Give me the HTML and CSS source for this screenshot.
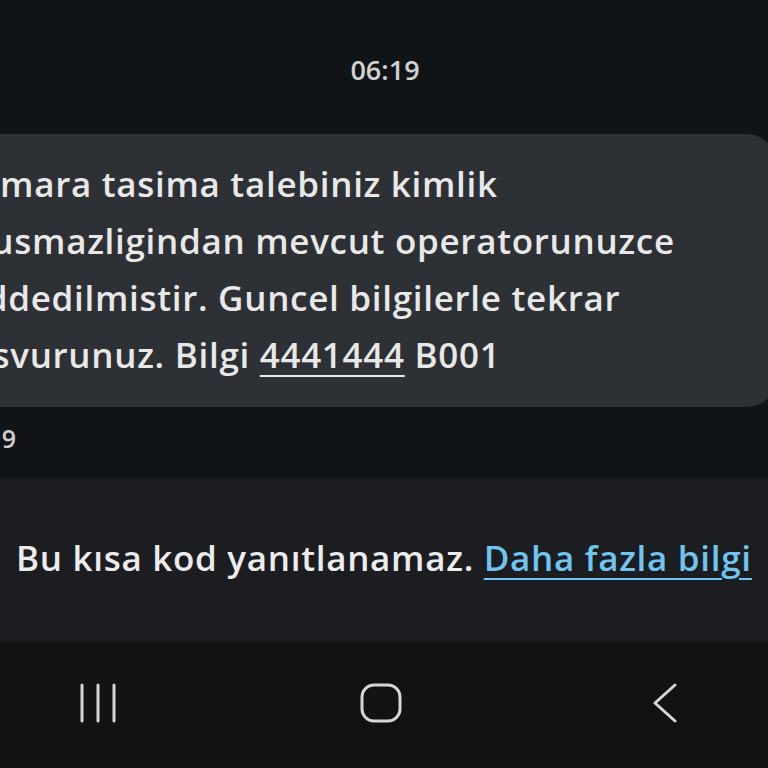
FILE: index.html
```html
<!DOCTYPE html>
<html lang="tr">
<head>
<meta charset="utf-8">
<title>Mesaj</title>
<link rel="stylesheet" href="styles.css">
</head>
<body>
<div class="screen">
  <div class="header"><span class="date-time">06:19</span></div>
  <div class="thread">
    <div class="bubble">
      <div class="line">Numara tasima talebiniz kimlik</div>
      <div class="line">uyusmazligindan mevcut operatorunuzce</div>
      <div class="line">reddedilmistir. Guncel bilgilerle tekrar</div>
      <div class="line">basvurunuz. Bilgi <span class="num">4441444</span> B001</div>
    </div>
    <div class="stamp">06:19</div>
  </div>
  <div class="notice">
    <p class="notice-text">Bu kısa kod yanıtlanamaz. <span class="link">Daha fazla bilgi</span></p>
  </div>
  <nav class="navbar">
    <svg class="nav-recent" width="36" height="40" viewBox="0 0 36 40"><g stroke="#d6d6d6" stroke-width="3" stroke-linecap="round"><line x1="2" y1="2" x2="2" y2="38"/><line x1="18" y1="2" x2="18" y2="38"/><line x1="34" y1="2" x2="34" y2="38"/></g></svg>
    <svg class="nav-home" width="42" height="40" viewBox="0 0 42 40"><rect x="2" y="2" width="38" height="36" rx="12" ry="12" fill="none" stroke="#d6d6d6" stroke-width="3"/></svg>
    <svg class="nav-back" width="26" height="40" viewBox="0 0 26 40"><polyline points="23,2 3,20 23,38" fill="none" stroke="#d6d6d6" stroke-width="3" stroke-linecap="round" stroke-linejoin="round"/></svg>
  </nav>
</div>
</body>
</html>
```
FILE: styles.css
```css
html, body {
  margin: 0;
  padding: 0;
  background: #111417;
}
body {
  width: 768px;
  height: 768px;
  overflow: hidden;
  font-family: "Open Sans", Roboto, sans-serif;
}
.screen {
  display: flex;
  flex-direction: column;
  height: 768px;
}
.header {
  height: 134px;
  display: flex;
  justify-content: center;
  padding-top: 51px;
  box-sizing: border-box;
}
.date-time {
  color: #d2d2d2;
  font-size: 27px;
  line-height: 38px;
  font-weight: 600;
  padding-left: 2px;
}
.thread {
  height: 344px;
  overflow: hidden;
}
.bubble {
  margin-left: -70px;
  margin-right: -10px;
  background: #2d3034;
  border-radius: 32px;
  height: 273px;
  box-sizing: border-box;
  padding: 21px 0 0 19px;
  color: #e8e8e8;
  font-size: 35px;
  line-height: 57px;
  font-weight: 600;
  letter-spacing: 0.7px;
}
.line {
  white-space: nowrap;
}
.num {
  text-decoration: underline;
  text-decoration-thickness: 2px;
  text-underline-offset: 7px;
}
.stamp {
  margin-left: -48px;
  margin-top: 14px;
  color: #cfcfcf;
  font-size: 25px;
  line-height: 34px;
  font-weight: 600;
}
.notice {
  height: 164px;
  background: #1b1d20;
  display: flex;
  align-items: center;
  padding-left: 16px;
}
.notice-text {
  margin: 0;
  padding-bottom: 6px;
  color: #ececec;
  font-size: 35px;
  font-weight: 600;
  letter-spacing: 0.7px;
  white-space: nowrap;
}
.link {
  color: #70c4f0;
  text-decoration: underline;
  text-decoration-thickness: 2px;
  text-underline-offset: 7px;
}
.navbar {
  flex: 1;
  background: #111214;
  display: flex;
  align-items: center;
  padding-bottom: 4px;
}
.nav-recent { margin-left: 80px; }
.nav-home { margin-left: 244px; }
.nav-back { margin-left: 250px; }
```
